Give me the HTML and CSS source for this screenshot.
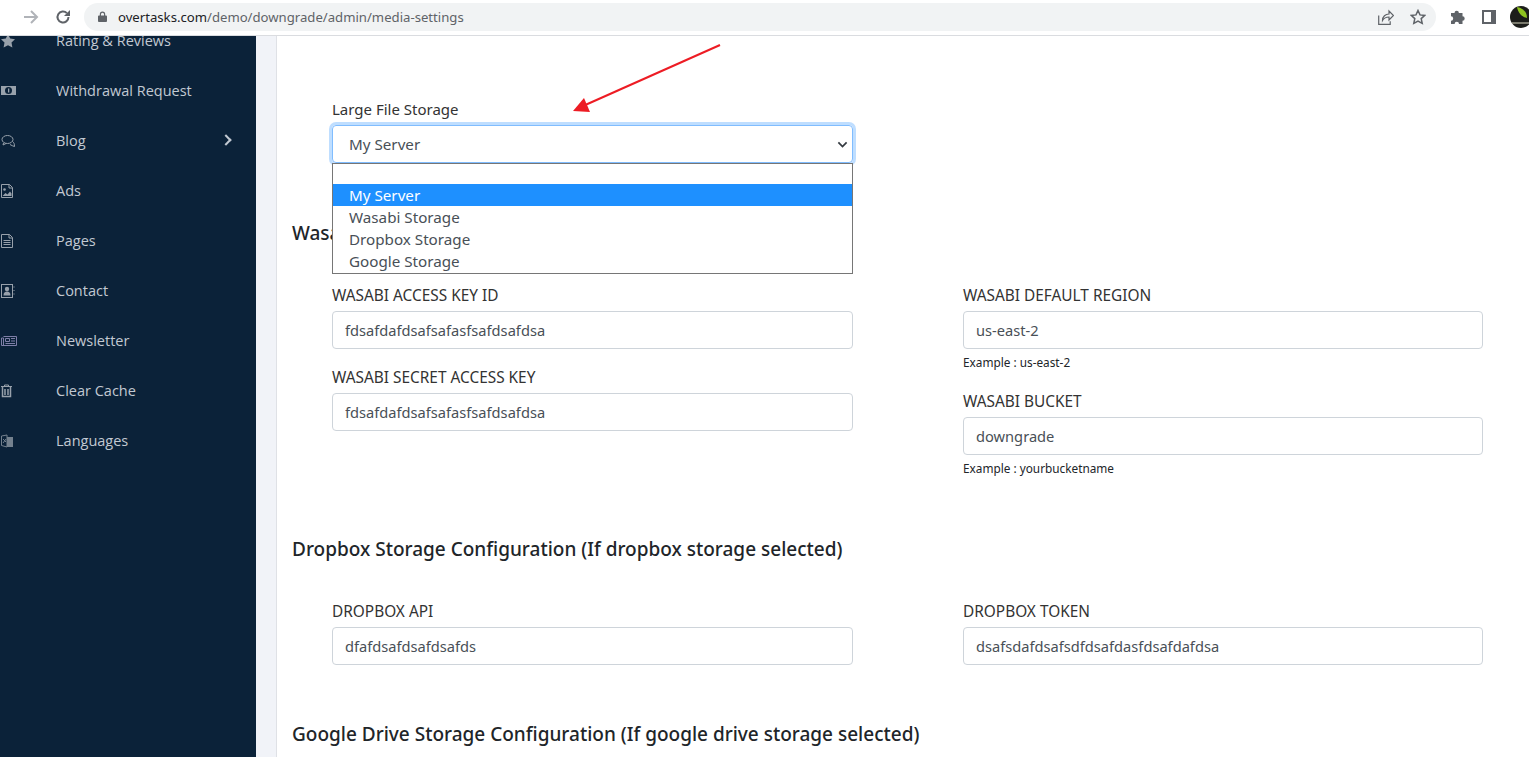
FILE: index.html
```html
<!DOCTYPE html>
<html lang="en">
<head>
    <meta charset="UTF-8">
    <meta name="viewport" content="width=device-width, initial-scale=1.0">
    <title>Media Settings</title>
    <link rel="stylesheet" href="styles.css">
</head>
<body>
    <!-- Browser bar -->
    <header class="browser-bar">
        <svg class="nav-icon back-icon" viewBox="0 0 16 16"><path d="M0 8h7"/></svg>
        <svg class="nav-icon forward-icon" viewBox="0 0 16 16"><path d="M1 8h13M8 2l6 6-6 6"/></svg>
        <svg class="nav-icon reload-icon" viewBox="0 0 16 16"><path d="M13.500 8a5.500 5.500 0 1 1-1.600-3.900"/><path class="solid" d="M15 1v6H9z"/></svg>
        <div class="address">
            <svg class="lock-icon" viewBox="0 0 10 12"><path d="M2 5V3.500a3 3 0 0 1 6 0V5h1a1 1 0 0 1 1 1v5a1 1 0 0 1-1 1H1a1 1 0 0 1-1-1V6a1 1 0 0 1 1-1zm1.300 0h3.400V3.500a1.700 1.700 0 0 0-3.400 0z"/></svg>
            <span class="url"><b>overtasks.com</b>/demo/downgrade/admin/media-settings</span>
            <svg class="bar-icon" viewBox="0 0 16 16"><path d="M.7 6.500v8.800h11.500v-3M4.500 11.500c0-4 3-6.500 6.500-6.500V2l4.500 4.500L11 11V8c-3 0-5 1-6.500 3.500z"/></svg>
            <svg class="bar-icon star-icon" viewBox="0 0 16 16"><path d="M8 1.500l2 4.400 4.800.5-3.600 3.200 1 4.700L8 12l-4.200 2.300 1-4.700L1.200 6.400 6 5.900z"/></svg>
        </div>
        <svg class="tool-icon puzzle-icon" viewBox="0 0 16 16"><path d="M1 4h3.500a2.200 2.200 0 0 1 4.400 0H12.500v3.300a2.200 2.200 0 0 1 0 4.400V15H9a2.200 2.200 0 0 0-4.400 0H1v-3.300a2.200 2.200 0 0 0 0-4.400z"/></svg>
        <svg class="tool-icon panel-icon" viewBox="0 0 14 14"><path d="M0 0h14v14H0zM2 2v10h7V2z" fill-rule="evenodd"/></svg>
        <svg class="avatar" viewBox="0 0 22 22"><circle cx="11" cy="11" r="11" fill="#1c1d1a"/><path d="M7 1c6 1 10 5 10 11-5-1-9-5-10-11z" fill="#8fc31f"/><path d="M2 17h18" stroke="#9a9a8a" stroke-width="1.500"/></svg>
    </header>

    <div class="layout">
        <aside class="sidebar">
            <ul class="menu">
                <li><svg viewBox="0 0 18 14"><path class="fill" d="M8 0l2.200 4.500 4.800.7-3.500 3.400.9 4.900L8 11.200l-4.400 2.300.9-4.900L1 5.200l4.800-.7z"/></svg>Rating &amp; Reviews</li>
                <li><svg viewBox="0 0 18 14"><path class="fill" d="M1 2h15v9H1z"/><circle class="hole" cx="8.500" cy="6.500" r="3.500"/><path class="fill" d="M8 4.500h1.300v4H8z"/></svg>Withdrawal Request</li>
                <li class="has-sub"><svg viewBox="0 0 18 14"><ellipse cx="7.500" cy="5.500" rx="5.500" ry="4"/><path d="M3.500 9 3 11l3-1.500M12.500 7.500c1.500 1 2 2.500 2 5-1.500-.5-3-1-4.500-2"/></svg>Blog<span class="chevron"></span></li>
                <li><svg viewBox="0 0 18 14"><path d="M1.500.5h8l3 3v10h-11zM9 .5v3.500h3.500"/><path class="fill" d="M2.500 12l3-3 2 1.500 2.500-3 1.500 2v2.500z"/><circle class="fill" cx="4.500" cy="5.500" r="1.300"/></svg>Ads</li>
                <li><svg viewBox="0 0 18 14"><path d="M1.500.5h8l3 3v10h-11zM9 .5v3.500h3.500M3.500 6.500h7M3.500 8.500h7M3.500 10.500h7"/></svg>Pages</li>
                <li><svg viewBox="0 0 18 14"><rect x="1.500" y=".5" width="11" height="13"/><circle class="fill" cx="7" cy="5" r="2.200"/><path class="fill" d="M3.500 11.500c0-3 1.500-4 3.500-4s3.500 1 3.500 4z"/><path class="dots" d="M14 2.500v2M14 6v2M14 9.500v2"/></svg>Contact</li>
                <li class="tinted"><svg viewBox="0 0 18 14"><path d="M3.500 2.500h13v9h-15V4h2v7.500M5.500 4.500h4v3h-4zM11 4.500h4M11 7h4M5.500 9.500H15"/></svg>Newsletter</li>
                <li><svg viewBox="0 0 18 14"><path d="M1 2.500h11M4.500 2.500V1h4v1.500"/><path d="M2.500 3v9.500h8V3M5 5v6M8 5v6" stroke-width="1.500"/></svg>Clear Cache</li>
                <li class="faded"><svg viewBox="0 0 18 14"><path d="M1.500 2 7 1v12l-5.500-1.500zM3 5l3 3M6 5 3 9"/><path class="fill" d="M7 3h6v10H7z"/></svg>Languages</li>
            </ul>
        </aside>
        <div class="gutter"></div>

        <main class="content">
            <div class="form-group storage-select">
                <label class="plain-label">Large File Storage</label>
                <div class="select-box">
                    <span>My Server</span>
                    <svg viewBox="0 0 16 16"><path d="M2 5l6 6 6-6"/></svg>
                </div>
                <ul class="dropdown">
                    <li class="blank"></li>
                    <li class="selected">My Server</li>
                    <li>Wasabi Storage</li>
                    <li>Dropbox Storage</li>
                    <li>Google Storage</li>
                </ul>
            </div>

            <h5 class="wasabi-title">Wasabi Storage Configuration (If wasabi storage selected)</h5>
            <div class="form-row wasabi-row">
                <div class="form-col">
                    <div class="form-group spaced">
                        <label>WASABI ACCESS KEY ID</label>
                        <input class="form-control" type="text" value="fdsafdafdsafsafasfsafdsafdsa">
                    </div>
                    <div class="form-group">
                        <label>WASABI SECRET ACCESS KEY</label>
                        <input class="form-control" type="text" value="fdsafdafdsafsafasfsafdsafdsa">
                    </div>
                </div>
                <div class="form-col">
                    <div class="form-group has-hint">
                        <label>WASABI DEFAULT REGION</label>
                        <input class="form-control" type="text" value="us-east-2">
                        <small>Example : us-east-2</small>
                    </div>
                    <div class="form-group has-hint">
                        <label>WASABI BUCKET</label>
                        <input class="form-control" type="text" value="downgrade">
                        <small>Example : yourbucketname</small>
                    </div>
                </div>
            </div>

            <h5 class="dropbox-title">Dropbox Storage Configuration (If dropbox storage selected)</h5>
            <div class="form-row dropbox-row">
                <div class="form-col">
                    <div class="form-group">
                        <label>DROPBOX API</label>
                        <input class="form-control" type="text" value="dfafdsafdsafdsafds">
                    </div>
                </div>
                <div class="form-col">
                    <div class="form-group">
                        <label>DROPBOX TOKEN</label>
                        <input class="form-control" type="text" value="dsafsdafdsafsdfdsafdasfdsafdafdsa">
                    </div>
                </div>
            </div>

            <h5 class="drive-title">Google Drive Storage Configuration (If google drive storage selected)</h5>
        </main>
    </div>

    <!-- Red arrow drawn over the screenshot -->
    <svg class="annotation" viewBox="0 0 160 75"><path d="M147 1 10 62" stroke="#ed1c24" stroke-width="2" fill="none"/><path d="M0 67 11 54l6 14z" fill="#ed1c24"/></svg>
</body>
</html>
```

FILE: styles.css
```css
* {
    box-sizing: border-box;
}

html, body {
    height: 100%;
    overflow: hidden;
}

body {
    margin: 0;
    font-family: 'Noto Sans', 'Open Sans', sans-serif;
    background-color: #fff;
}

/* Browser bar */
.browser-bar {
    display: flex;
    align-items: center;
    height: 36px;
    padding-bottom: 2px;
    border-bottom: 1px solid #dadce0;
    background-color: #fff;
}
.nav-icon {
    width: 16px;
    height: 16px;
    flex: none;
    fill: none;
    stroke: #5f6368;
    stroke-width: 2;
}
.nav-icon .solid {
    fill: #5f6368;
    stroke: none;
}
.back-icon {
    margin-left: -10px;
}
.forward-icon {
    margin-left: 17px;
    stroke: #b0b3b8;
}
.reload-icon {
    margin-left: 16px;
}
.address {
    display: flex;
    align-items: center;
    flex: none;
    width: 1352px;
    height: 28px;
    margin-left: 13px;
    padding: 0 10px 0 14px;
    border-radius: 14px;
    background-color: #f1f3f4;
}
.lock-icon {
    width: 9px;
    height: 11px;
    fill: #5f6368;
}
.url {
    flex: 1;
    margin-left: 11px;
    font-size: 13.150px;
    color: #5f6368;
}
.url b {
    font-weight: 400;
    color: #202124;
}
.bar-icon {
    width: 16px;
    height: 16px;
    fill: none;
    stroke: #5f6368;
    stroke-width: 1.200;
    margin-right: 16px;
}
.star-icon {
    margin-right: 0;
    stroke-width: 1.500;
}
.tool-icon {
    width: 16px;
    height: 16px;
    fill: #5f6368;
    flex: none;
}
.puzzle-icon {
    margin-left: 14px;
}
.panel-icon {
    width: 14px;
    height: 14px;
    margin-left: 16px;
}
.avatar {
    width: 22px;
    height: 22px;
    flex: none;
    margin-left: 14px;
}

/* Page layout */
.layout {
    display: flex;
    height: 721px;
}
.sidebar {
    width: 256px;
    flex: none;
    overflow: hidden;
    background-color: #0b2239;
}
.gutter {
    width: 21px;
    flex: none;
    background-color: #f1f3f8;
    border-right: 1px solid #dfe1e6;
}

/* Sidebar menu */
.menu {
    list-style: none;
    margin: -21px 0 0;
    padding: 0;
}
.menu li {
    position: relative;
    display: flex;
    align-items: center;
    height: 50px;
    padding-left: 56px;
    font-family: 'Open Sans', sans-serif;
    font-size: 14.500px;
    color: #c2c9d2;
}
.menu svg {
    position: absolute;
    left: 0;
    top: 19px;
    width: 18px;
    height: 14px;
    fill: none;
    stroke: #98a1ab;
    stroke-width: 1;
}
.menu svg .fill {
    fill: #98a1ab;
    stroke: none;
}
.menu svg .hole {
    fill: #0b2239;
    stroke: none;
}
.menu svg .dots {
    stroke-dasharray: 1 1;
}
.menu .tinted svg {
    stroke: #7f7fa8;
}
.menu .faded svg {
    opacity: .75;
}
.chevron {
    position: absolute;
    left: 222px;
    top: 21px;
    width: 8px;
    height: 8px;
    border-top: 2px solid #c2c9d2;
    border-right: 2px solid #c2c9d2;
    transform: rotate(45deg);
}

/* Main form */
.content {
    flex: 1;
    min-width: 0;
    padding: 63px 46px 0 15px;
    color: #212529;
}
.form-group {
    margin-bottom: 17px;
}
.form-group label {
    display: block;
    margin-bottom: 5px;
    font-size: 15.400px;
    line-height: 21px;
    color: #333;
}
.form-group .plain-label {
    font-size: 15px;
}
.has-hint {
    margin-bottom: 20px;
}
.spaced {
    margin-bottom: 18px;
}
.storage-select {
    position: relative;
    width: 521px;
    margin-left: 40px;
}
.select-box {
    display: flex;
    align-items: center;
    justify-content: space-between;
    height: 38px;
    padding: 0 4px 0 16px;
    border: 1px solid #80bdff;
    border-radius: 4px;
    box-shadow: 0 0 0 3px rgba(0, 123, 255, .25);
    font-size: 15.200px;
    color: #495057;
}
.select-box svg {
    width: 11px;
    height: 11px;
    fill: none;
    stroke: #343a40;
    stroke-width: 2.500;
}
.dropdown {
    position: absolute;
    top: 64px;
    left: 0;
    width: 521px;
    margin: 0;
    padding: 0 0 1px;
    list-style: none;
    border: 1px solid #767676;
    background-color: #fff;
    font-size: 15.200px;
    line-height: 22px;
    color: #495057;
}
.dropdown li {
    height: 22px;
    padding-left: 16px;
}
.dropdown .blank {
    height: 20px;
}
.dropdown .selected {
    background-color: #1e90ff;
    color: #fff;
}
h5 {
    margin: 0;
    font-size: 19px;
    font-weight: 500;
    line-height: 24px;
    white-space: nowrap;
}
.wasabi-title {
    margin-top: 58px;
}
.dropbox-title {
    margin-top: 40px;
}
.drive-title {
    margin-top: 40px;
}
.form-row {
    display: flex;
    gap: 110px;
    padding-left: 40px;
}
.wasabi-row {
    margin-top: 40px;
}
.dropbox-row {
    margin-top: 40px;
}
.form-col {
    width: 521px;
    flex: none;
}
.form-col:last-child {
    width: 520px;
}
.form-control {
    display: block;
    width: 100%;
    height: 38px;
    padding: 6px 12px;
    border: 1px solid #ced4da;
    border-radius: 4px;
    font-family: inherit;
    font-size: 14.650px;
    color: #495057;
    background-color: #fff;
}
small {
    display: block;
    margin-top: 5px;
    font-size: 11.800px;
    line-height: 17px;
    color: #212529;
}

/* Annotation */
.annotation {
    position: absolute;
    left: 573px;
    top: 44px;
    width: 160px;
    height: 75px;
    overflow: visible;
}
```
